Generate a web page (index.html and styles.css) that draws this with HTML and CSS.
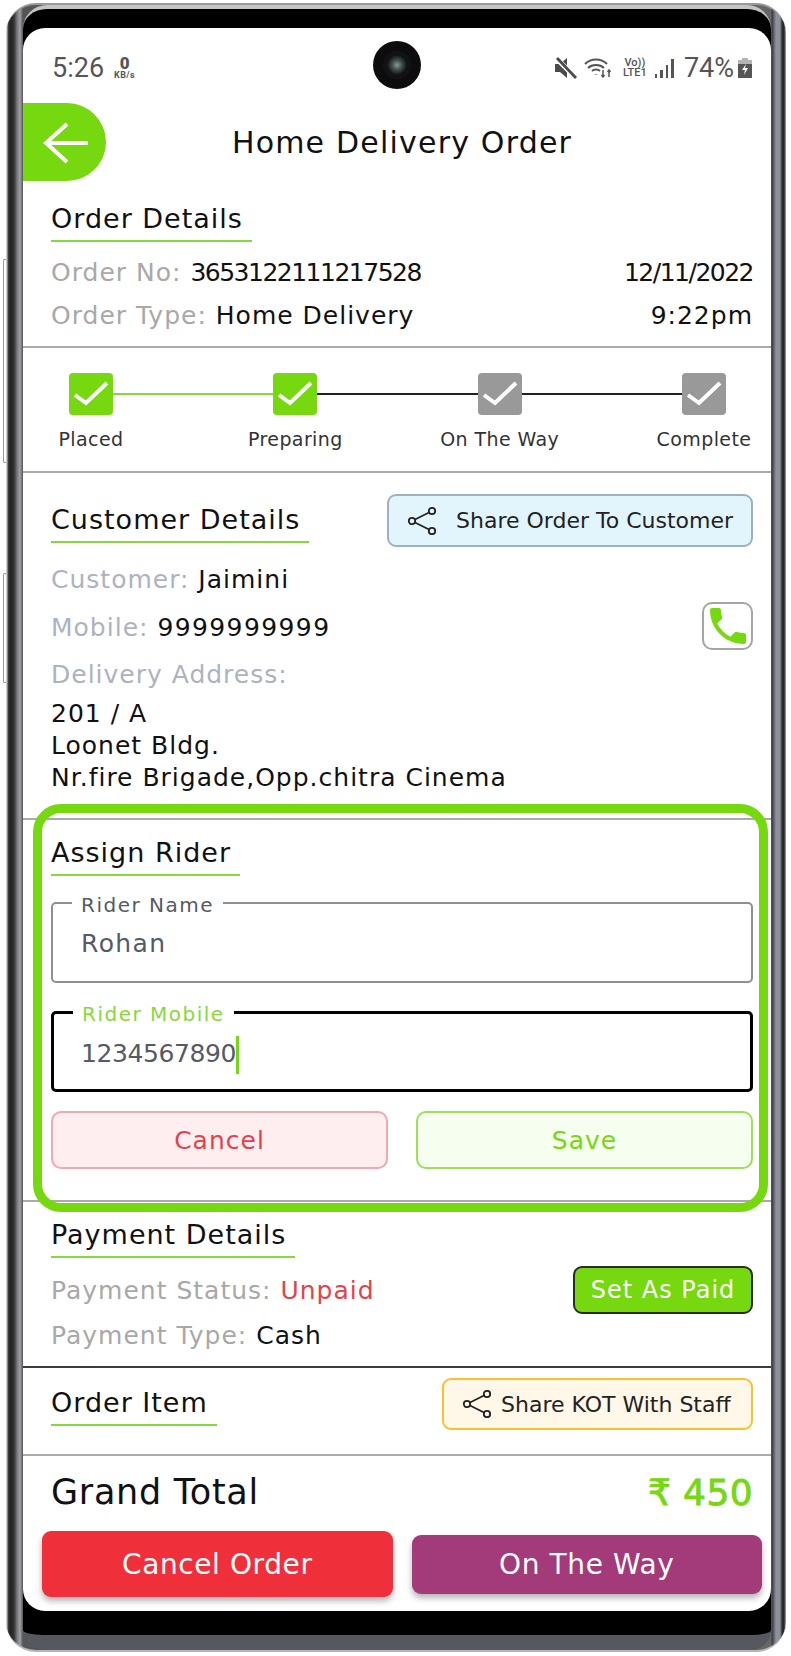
FILE: index.html
```html
<!DOCTYPE html>
<html lang="en">
<head>
    <meta charset="UTF-8">
    <meta name="viewport" content="width=device-width, initial-scale=1.0">
    <title>Home Delivery Order</title>
    <link rel="stylesheet" href="styles.css">
</head>
<body>

    <div class="phone">
        <span class="side-key key-one"></span>
        <span class="side-key key-two"></span>
        <div class="glass">
            <div class="screen">

                <!-- status bar -->
                <div class="status-bar">
                    <span class="clock">5:26</span>
                    <span class="speed"><b>0</b><small>KB/s</small></span>
                    <span class="camera"><span class="lens"></span></span>
                    <div class="status-icons">
                        <svg class="icon-mute" width="23" height="22" viewBox="0 0 23 22">
                            <path d="M1 7h5l7-6v20l-7-6H1z" fill="#4a4a4a"/>
                            <path d="M1 0l22 22" stroke="#fff" stroke-width="5"/>
                            <path d="M3 1l19 20" stroke="#4a4a4a" stroke-width="2.800"/>
                        </svg>
                        <svg class="icon-wifi" width="29" height="20" viewBox="0 0 29 20" fill="none" stroke="#555" stroke-width="2">
                            <path d="M1 6c6-6 16-6 22 0"/>
                            <path d="M4 10c4-4 12-4 16 0"/>
                            <path d="M8 13c2-2 6-2 8 0"/>
                            <path d="M12 16v.5" stroke-width="3"/>
                            <path d="M19 12v7M17.500 17l1.500 2 1.500-2M25 19v-7M23.500 14l1.500-2 1.500 2" stroke-width="1.500"/>
                        </svg>
                        <span class="volte">Vo))<br>LTE1</span>
                        <span class="bars"><i class="bar-1"></i><i class="bar-2"></i><i class="bar-3"></i><i class="bar-4"></i></span>
                        <span class="battery-text">74%</span>
                        <svg class="icon-battery" width="14" height="20" viewBox="0 0 14 20">
                            <path d="M4 0h6v2h4v4H0V2h4z" fill="#b5b5b5"/>
                            <path d="M0 6h14v14H0z" fill="#555"/>
                            <path d="M8 6l-4 6h3l-1 5 4-7H7z" fill="#fff"/>
                        </svg>
                    </div>
                </div>

                <!-- header -->
                <div class="page-header">
                    <a class="back-button">
                        <svg width="46" height="42" viewBox="0 0 46 42" fill="none" stroke="#fff" stroke-width="4">
                            <path d="M3 21h43"/>
                            <path d="M25 2L4 21l21 19"/>
                        </svg>
                    </a>
                    <h1>Home Delivery Order</h1>
                </div>

                <!-- order details -->
                <div class="section order-section">
                    <h2 class="section-title">Order Details</h2>
                    <div class="order-row">
                        <span><em>Order No:</em> <span class="digits">3653122111217528</span></span>
                        <span class="digits">12/11/2022</span>
                    </div>
                    <div class="order-row">
                        <span><em>Order Type:</em> Home Delivery</span>
                        <span>9:22pm</span>
                    </div>
                </div>

                <!-- progress -->
                <div class="stepper">
                    <div class="step-track">
                        <span class="step-box done"><svg width="44" height="42" viewBox="0 0 44 42" fill="none" stroke="#fff" stroke-width="4"><path d="M6 22l11 8L38 10"/></svg></span>
                        <span class="step-line done"></span>
                        <span class="step-box done"><svg width="44" height="42" viewBox="0 0 44 42" fill="none" stroke="#fff" stroke-width="4"><path d="M6 22l11 8L38 10"/></svg></span>
                        <span class="step-line"></span>
                        <span class="step-box"><svg width="44" height="42" viewBox="0 0 44 42" fill="none" stroke="#fff" stroke-width="4"><path d="M6 22l11 8L38 10"/></svg></span>
                        <span class="step-line"></span>
                        <span class="step-box"><svg width="44" height="42" viewBox="0 0 44 42" fill="none" stroke="#fff" stroke-width="4"><path d="M6 22l11 8L38 10"/></svg></span>
                    </div>
                    <div class="step-labels">
                        <span>Placed</span>
                        <span>Preparing</span>
                        <span>On The Way</span>
                        <span>Complete</span>
                    </div>
                </div>

                <!-- customer details -->
                <div class="section customer-section">
                    <div class="head-row">
                        <h2 class="section-title">Customer Details</h2>
                        <button class="share-button share-order">
                            <svg width="30" height="28" viewBox="0 0 30 28" fill="none" stroke="#222" stroke-width="1.800">
                                <circle cx="25" cy="4" r="3.200"/>
                                <circle cx="5" cy="14" r="3.200"/>
                                <circle cx="25" cy="24" r="3.200"/>
                                <path d="M8 12.500L22 5.500M8 15.500l14 7"/>
                            </svg>
                            Share Order To Customer
                        </button>
                    </div>
                    <div class="info-row"><em>Customer:</em> Jaimini</div>
                    <div class="info-row mobile-row">
                        <span><em>Mobile:</em> <span class="phone-digits">9999999999</span></span>
                        <a class="call-button">
                            <svg width="36" height="36" viewBox="3 3 18 18"><path fill="#76d80f" d="M6.620 10.790c1.440 2.830 3.760 5.140 6.590 6.590l2.200-2.200c.27-.27.67-.36 1.020-.24 1.120.37 2.330.57 3.570.57.55 0 1 .45 1 1V20c0 .55-.45 1-1 1-9.390 0-17-7.610-17-17 0-.55.45-1 1-1h3.500c.55 0 1 .45 1 1 0 1.250.2 2.450.57 3.570.11.35.03.74-.25 1.020l-2.200 2.200z"/></svg>
                        </a>
                    </div>
                    <div class="info-row address-label"><em>Delivery Address:</em></div>
                    <div class="address">201 / A<br>Loonet Bldg.<br>Nr.fire Brigade,Opp.chitra Cinema</div>
                </div>

                <!-- assign rider -->
                <div class="section rider-section">
                    <h2 class="section-title">Assign Rider</h2>
                    <fieldset class="field">
                        <legend>Rider Name</legend>
                        <div class="field-value">Rohan</div>
                    </fieldset>
                    <fieldset class="field active">
                        <legend>Rider Mobile</legend>
                        <div class="field-value"><span class="typed-digits">1234567890</span><span class="caret"></span></div>
                    </fieldset>
                    <div class="form-buttons">
                        <button class="form-button cancel">Cancel</button>
                        <button class="form-button save">Save</button>
                    </div>
                    <div class="highlight-box"></div>
                </div>

                <!-- payment -->
                <div class="section payment-section">
                    <h2 class="section-title">Payment Details</h2>
                    <div class="payment-row">
                        <div class="payment-info">
                            <div><em>Payment Status:</em> <span class="unpaid">Unpaid</span></div>
                            <div><em>Payment Type:</em> Cash</div>
                        </div>
                        <button class="paid-button">Set As Paid</button>
                    </div>
                </div>

                <!-- order item -->
                <div class="section item-section">
                    <div class="head-row">
                        <h2 class="section-title">Order Item</h2>
                        <button class="share-button share-kot">
                            <svg width="30" height="28" viewBox="0 0 30 28" fill="none" stroke="#222" stroke-width="1.800">
                                <circle cx="25" cy="4" r="3.200"/>
                                <circle cx="5" cy="14" r="3.200"/>
                                <circle cx="25" cy="24" r="3.200"/>
                                <path d="M8 12.500L22 5.500M8 15.500l14 7"/>
                            </svg>
                            Share KOT With Staff
                        </button>
                    </div>
                </div>

                <!-- total -->
                <div class="total-row">
                    <span class="total-label">Grand Total</span>
                    <span class="total-value">₹ 450</span>
                </div>

                <div class="actions">
                    <button class="action-button red">Cancel Order</button>
                    <button class="action-button purple">On The Way</button>
                </div>

            </div>
        </div>
    </div>

</body>
</html>
```

FILE: styles.css
```css
body {
    margin: 0;
    background-color: #fff;
    font-family: "DejaVu Sans", Verdana, sans-serif;
    color: #111;
}

button {
    font-family: inherit;
    padding: 0;
    cursor: pointer;
}

/* phone frame */
.phone {
    position: relative;
    width: 780px;
    height: 1649px;
    margin: 3px 0 0 6px;
    padding: 0 15px 0 17px;
    box-sizing: border-box;
    border-radius: 30px;
    border-top: 2px solid #999;
    border-bottom: 2px solid #b5b5b5;
    background: linear-gradient(90deg, #ccc 0, #ccc 1px, #444 2px, #222 4px, #333 8px, #777 11px, #a0a0a8 14px, #555 17px, #666 765px, #3a3a3e 766px, #8d919b 770px, #8d919b 774px, #333 776px, #222 778px, #aaa 780px);
}

.side-key {
    position: absolute;
    left: -3px;
    width: 3px;
    border: 1px solid #999;
    border-right: none;
    border-radius: 2px 0 0 2px;
    box-sizing: border-box;
}

.key-one {
    top: 254px;
    height: 204px;
}

.key-two {
    top: 568px;
    height: 110px;
}

.glass {
    height: 100%;
    padding: 19px 0 24px;
    box-sizing: border-box;
    background-color: #000;
    border-top: 4px solid #c4c4c4;
    border-bottom: 15px solid #55585e;
    border-radius: 24px 24px 20px 20px;
}

.screen {
    height: 1583px;
    background-color: #fff;
    border-radius: 22px;
    overflow: hidden;
    position: relative;
}

/* status bar */
.status-bar {
    height: 75px;
    display: flex;
    align-items: flex-start;
    padding: 0 19px 0 29px;
    box-sizing: border-box;
    font-family: Roboto, sans-serif;
    color: #555;
}

.clock {
    font-size: 27px;
    line-height: 30px;
    margin-top: 25px;
}

.speed {
    margin: 28px 0 0 10px;
    display: flex;
    flex-direction: column;
    align-items: center;
    font-weight: 700;
    color: #555;
}

.speed b {
    font-size: 17px;
    line-height: 15px;
}

.speed small {
    font-size: 9px;
    line-height: 9px;
    letter-spacing: 0.4px;
}

.camera {
    position: absolute;
    left: 350px;
    top: 13px;
    width: 48px;
    height: 48px;
    border-radius: 50%;
    background-color: #0c0c0c;
    display: flex;
    align-items: center;
    justify-content: center;
}

.lens {
    width: 28px;
    height: 28px;
    border-radius: 50%;
    background: radial-gradient(circle, #8a9a95 0, #4a5552 22%, #101214 50%, #101214 74%, #3c3c3e 88%, #1a1a1a 100%);
}

.status-icons {
    margin-left: auto;
    margin-top: 28px;
    display: flex;
    align-items: center;
    height: 24px;
}

.icon-wifi {
    margin-left: 7px;
}

.volte {
    margin-left: 8px;
    font-size: 11px;
    line-height: 10px;
    font-weight: 500;
    text-align: center;
    width: 28px;
}

.bars {
    margin-left: 6px;
    display: flex;
    align-items: flex-end;
    gap: 3px;
    height: 20px;
}

.bars i {
    width: 2.500px;
    background-color: #555;
}

.bar-1 { height: 4px; }
.bar-2 { height: 8px; }
.bar-3 { height: 13px; }
.bar-4 { height: 19px; }

.battery-text {
    margin-left: 10px;
    font-size: 27px;
    line-height: 30px;
}

.icon-battery {
    margin-left: 4px;
}

/* header */
.page-header {
    height: 78px;
    display: flex;
    align-items: center;
}

.back-button {
    width: 83px;
    height: 78px;
    flex: none;
    box-sizing: border-box;
    padding: 19px 0 0 19px;
    background-color: #76d80f;
    border-radius: 0 39px 39px 0;
}

.back-button svg {
    display: block;
}

h1 {
    flex: 1;
    margin: 0;
    padding-right: 73px;
    text-align: center;
    font-size: 30px;
    font-weight: 400;
    letter-spacing: 1.2px;
}

/* sections */
.section {
    padding-left: 28px;
    padding-right: 18px;
    border-bottom: 2px solid #aaa;
}

.section-title {
    display: table;
    margin: 0;
    padding: 0 9px 7px 0;
    font-size: 27px;
    line-height: 28px;
    font-weight: 400;
    letter-spacing: 1px;
    border-bottom: 2px solid #86d93a;
}

em {
    font-style: normal;
    color: #a8a8a8;
}

.digits {
    letter-spacing: -1.500px;
}

.phone-digits {
    letter-spacing: 1.400px;
}

.typed-digits {
    letter-spacing: -0.4px;
}

.order-section {
    height: 167px;
    padding-top: 24px;
    box-sizing: border-box;
}

.order-row {
    display: flex;
    justify-content: space-between;
    font-size: 25px;
    line-height: 43px;
    letter-spacing: 1px;
}

.order-row:first-of-type {
    margin-top: 9px;
}

/* progress */
.stepper {
    height: 125px;
    box-sizing: border-box;
    padding-top: 25px;
    border-bottom: 2px solid #aaa;
}

.step-track {
    display: flex;
    align-items: center;
    padding: 0 45px 0 46px;
}

.step-box {
    width: 44px;
    height: 42px;
    flex: none;
    border-radius: 4px;
    background-color: #999;
}

.step-box svg {
    display: block;
}

.step-box.done {
    background-color: #76d80f;
}

.step-line {
    flex: 1;
    height: 2px;
    background-color: #222;
}

.step-line.done {
    background-color: #86d93a;
}

.step-labels {
    display: flex;
    justify-content: space-between;
    padding: 0 17px 0 18px;
    margin-top: 11px;
    font-size: 19px;
    line-height: 26px;
    letter-spacing: 0.4px;
    color: #333;
}

.step-labels span {
    width: 100px;
    display: flex;
    justify-content: center;
    white-space: nowrap;
}

/* customer */
.customer-section {
    height: 347px;
    padding-top: 21px;
    box-sizing: border-box;
}

.head-row {
    display: flex;
    justify-content: space-between;
    align-items: flex-end;
}

.head-row .section-title {
    margin-bottom: 4px;
}

.share-button {
    display: flex;
    align-items: center;
    box-sizing: border-box;
    border-radius: 9px;
    color: #222;
    white-space: nowrap;
}

.share-order {
    width: 366px;
    height: 53px;
    padding-left: 18px;
    gap: 19px;
    font-size: 22px;
    background-color: #e2f5fd;
    border: 2px solid #9db2bf;
}

.share-kot {
    width: 311px;
    height: 52px;
    padding-left: 18px;
    gap: 9px;
    font-size: 22px;
    background-color: #fff8e9;
    border: 2px solid #fbc02d;
}

.info-row {
    font-size: 25px;
    line-height: 48px;
    letter-spacing: 1px;
}

.customer-section em {
    color: #adb2c2;
}

.customer-section .info-row:nth-child(2) {
    margin-top: 9px;
}

.mobile-row {
    display: flex;
    justify-content: space-between;
    align-items: center;
}

.call-button {
    width: 51px;
    height: 48px;
    margin-top: -4px;
    box-sizing: border-box;
    display: flex;
    align-items: center;
    justify-content: center;
    border: 2px solid #a5a5a5;
    border-radius: 10px;
}

.address-label {
    line-height: 46px;
}

.address {
    font-size: 25px;
    line-height: 32px;
    letter-spacing: 1px;
    white-space: nowrap;
}

/* rider */
.rider-section {
    position: relative;
    height: 382px;
    padding-top: 19px;
    box-sizing: border-box;
}

.field {
    margin: 13px 0 0;
    padding: 0 19px;
    height: 94px;
    box-sizing: border-box;
    border: 2px solid #8f8f8f;
    border-radius: 5px;
}

.field legend {
    padding: 4px 9px 0;
    font-size: 20px;
    line-height: 24px;
    letter-spacing: 1.500px;
    color: #555a64;
}

.field-value {
    padding-left: 9px;
    margin-top: 10px;
    font-size: 25px;
    line-height: 34px;
    letter-spacing: 1.400px;
    color: #555a64;
}

.field.active {
    margin-top: 15px;
    border: 3px solid #000;
}

.field.active legend {
    color: #86d93a;
}

.field.active .field-value {
    margin-top: 10px;
    padding-left: 8px;
}

.caret {
    display: inline-block;
    width: 3px;
    height: 38px;
    background-color: #76d80f;
    vertical-align: middle;
}

.form-buttons {
    display: flex;
    gap: 28px;
    margin-top: 19px;
}

.form-button {
    flex: 1;
    height: 58px;
    font-size: 25px;
    letter-spacing: 1px;
    border-radius: 10px;
}

.form-button.cancel {
    color: #e8404a;
    background-color: #feeeef;
    border: 2px solid #f6a6ac;
}

.form-button.save {
    color: #76d80f;
    background-color: #f6fef0;
    border: 2px solid #9be055;
}

.highlight-box {
    position: absolute;
    left: 10px;
    right: 3px;
    top: -16px;
    bottom: -12px;
    border: 9px solid #76d80f;
    border-radius: 28px;
    pointer-events: none;
}

/* payment */
.payment-section {
    height: 166px;
    padding-top: 19px;
    box-sizing: border-box;
    border-bottom-color: #3c3c3c;
}

.payment-row {
    display: flex;
    justify-content: space-between;
    align-items: flex-start;
    margin-top: 8px;
}

.payment-info {
    margin-top: 2px;
    font-size: 25px;
    line-height: 45px;
    letter-spacing: 1px;
}

.unpaid {
    color: #e8404a;
}

.paid-button {
    width: 180px;
    height: 48px;
    box-sizing: border-box;
    color: #fff;
    font-size: 24px;
    letter-spacing: 1px;
    background-color: #76d80f;
    border: 2px solid #2b2b2b;
    border-radius: 9px;
}

.item-section {
    height: 88px;
    padding-top: 10px;
    box-sizing: border-box;
}

/* total */
.total-row {
    height: 75px;
    padding: 0 18px 3px 28px;
    box-sizing: border-box;
    display: flex;
    justify-content: space-between;
    align-items: center;
}

.total-label {
    font-size: 35px;
    letter-spacing: 0.7px;
}

.total-value {
    font-size: 36px;
    letter-spacing: 0.4px;
    -webkit-text-stroke: 0.9px #76d80f;
    color: #76d80f;
}

.actions {
    display: flex;
    align-items: center;
    gap: 19px;
    padding: 0 9px 0 19px;
}

.action-button {
    flex: 1;
    border: none;
    color: #fff;
    font-size: 28px;
    letter-spacing: 0.6px;
    border-radius: 9px;
    box-shadow: 0 4px 6px rgba(0, 0, 0, 0.3);
}

.action-button.red {
    height: 66px;
    background-color: #ef303b;
}

.action-button.purple {
    height: 59px;
    background-color: #a33a7a;
}
```
